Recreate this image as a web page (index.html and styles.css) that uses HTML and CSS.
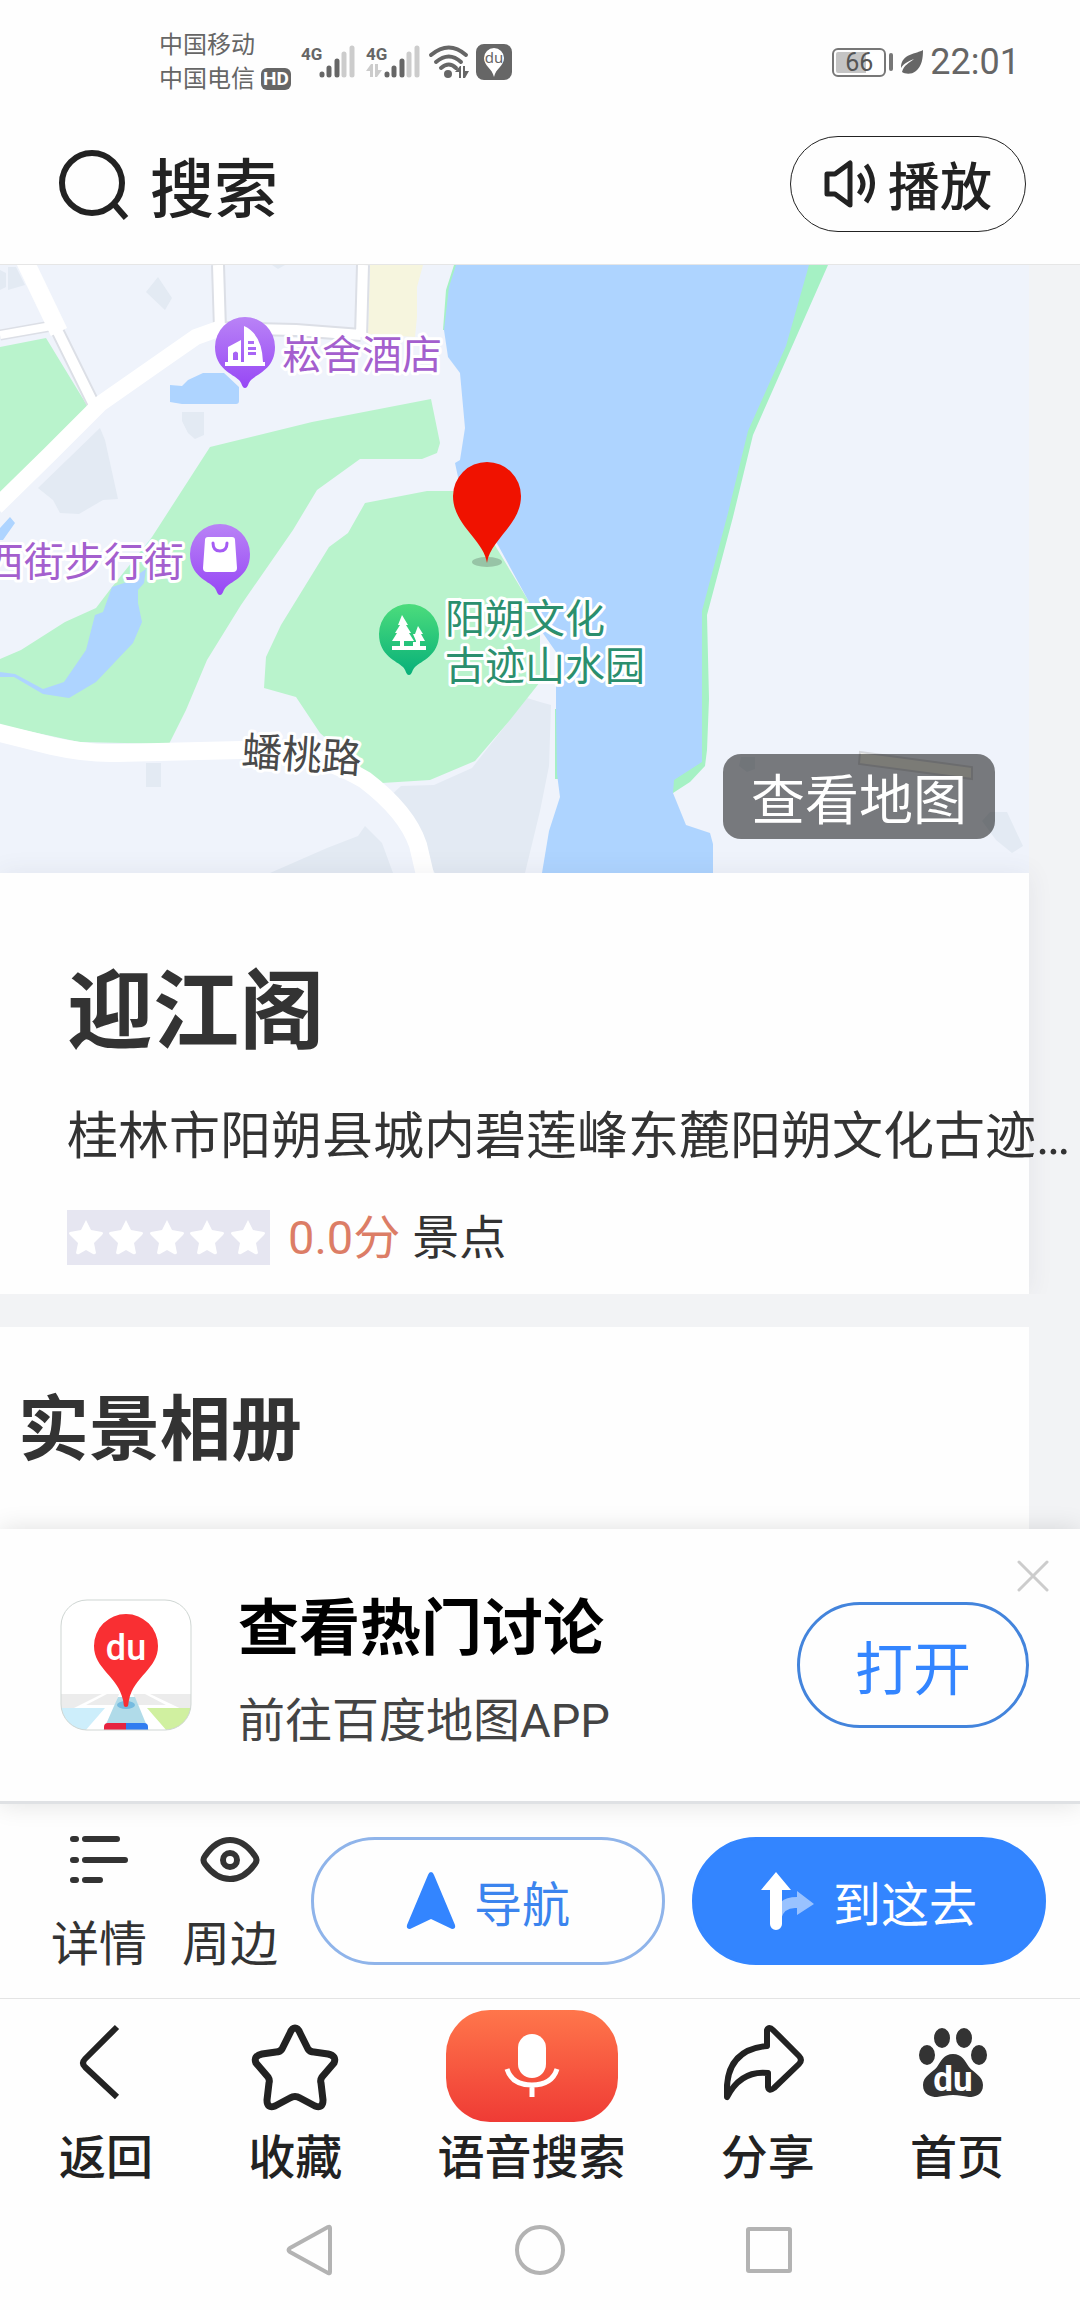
FILE: index.html
```html
<!DOCTYPE html>
<html lang="zh-CN">
<head>
    <meta charset="UTF-8">
    <meta name="viewport" content="width=device-width, initial-scale=1.0">
    <title>迎江阁</title>
    <link rel="stylesheet" href="styles.css">
</head>
<body>
    <div class="status-bar">
        <div class="carriers">
            <div>中国移动</div>
            <div class="carrier-row">中国电信 <span class="hd">HD</span></div>
        </div>
        <svg class="status-icons" width="212" height="38" viewBox="0 0 212 38" aria-hidden="true">
            <g fill="#666">
                <text class="net" x="0" y="17">4G</text>
                <text class="net" x="65" y="17">4G</text>
                <g stroke="#666" stroke-width="5" stroke-linecap="round">
                    <path d="M21 31v1M28 25v7M36 18v14M86 31v1M93 25v7M101 18v14"/>
                    <path stroke="#ccc" d="M43 11v21M51 5v27M108 11v21M116 5v27"/>
                </g>
                <path fill="#ccc" d="M65 28l5-7h2v13h-3v-6zM74 21h3v6h4l-5 7h-2z"/>
                <g fill="none" stroke="#666" stroke-width="4" stroke-linecap="round">
                    <path d="M130 12q18-15 35 0M135 19q13-11 25 0M140 25q8-7 15 0"/>
                </g>
                <circle cx="147" cy="31" r="4"/>
                <path d="M154 29l5-6h1v12h-2v-6zM162 23h2v5h4l-4 7h-2z"/>
                <rect x="175" y="1" width="36" height="36" rx="8"/>
                <path fill="#fff" d="M193 34c-2-9-10-11-10-19a10 10 0 0 1 20 0c0 8-8 10-10 19z"/>
                <text class="du-small" x="193" y="20" text-anchor="middle">du</text>
            </g>
        </svg>
        <div class="status-right">
            <span class="battery">66</span>
            <span class="battery-tip"></span>
            <svg width="24" height="26" viewBox="0 0 24 26" aria-hidden="true">
                <path fill="#666" d="M23 1c-6 4-22 3-22 18 3-5 8-7 13-9-5 4-10 6-12 13 3 2 9 3 14-1C22 17 23 9 23 1z"/>
            </svg>
            <span class="clock">22:01</span>
        </div>
    </div>

    <header class="top-bar">
        <button class="search-button">
            <svg width="72" height="72" viewBox="0 0 72 72" aria-hidden="true">
                <g fill="none" stroke="#222" stroke-width="6">
                    <circle cx="34" cy="35" r="30"/>
                    <path d="M55 55l13 15"/>
                </g>
            </svg>
            搜索
        </button>
        <button class="play-button">
            <svg width="52" height="48" viewBox="0 0 52 48" aria-hidden="true">
                <g fill="none" stroke="#222" stroke-width="5" stroke-linejoin="round">
                    <path d="M3 14h8L26 3v42L11 34H3z"/>
                    <path d="M35 14q8 10 0 20M42 5q13 18 0 37"/>
                </g>
            </svg>
            播放
        </button>
    </header>

    <main class="content">
        <section class="map">
            <svg class="map-canvas" viewBox="0 0 1029 608" role="img" aria-label="地图">
                <defs>
                    <linearGradient id="purple" x1="0" y1="0" x2="0" y2="1">
                        <stop offset="0" stop-color="#b983f6"/>
                        <stop offset="1" stop-color="#9747f5"/>
                    </linearGradient>
                    <linearGradient id="green" x1="0" y1="0" x2="0" y2="1">
                        <stop offset="0" stop-color="#4cdc7c"/>
                        <stop offset="1" stop-color="#07b079"/>
                    </linearGradient>
                    <path id="pin" d="M0 41c-3 0-3-5-6-8C-12 27-30 22-30 0a30 30 0 0 1 60 0C30 22 12 27 6 33 3 36 3 41 0 41z"/>
                </defs>
                <rect width="1029" height="608" fill="#eff3fb"/>

                <!-- buildings -->
                <g fill="#e3eaf3">
                    <path d="M158 12l14 21-7 12-19-18zM0 5l6 3v14l-6 3zM8 2h8l9 18-17 5zM182 147h22v23l-9 4-7-6-6-12z"/>
                    <path d="M100 163l5 12 13 59-15 1-24 14-19-1-7-13-15-12z"/>
                    <path d="M527 433l13 4 11 3-2 61-9 45-15 62h-90l-47-75 13-12 33-1 38-17z"/>
                    <path d="M365 561l17 17 11 30H270l57-25 31-12zM146 498h15v24h-15z"/>
                    <path d="M1007 547l16 34-11 7-16-13-14-19 8-9zM741 492h14v12l-8 3-8-6zM272 0l6 4 7-4z"/>
                </g>
                <path fill="#f6f5de" d="M370 0h53l-6 22v30l-2 20-47-3z"/>
                <path fill="#f7f6ec" stroke="#d6d8dc" stroke-width="2" d="M860 487l112 15v12l-113-15z"/>

                <!-- parks -->
                <g fill="#b9f3cc">
                    <path d="M0 82l46-9 42 69-2 5-50 48-36 35z"/>
                    <path d="M431 134l9 44-3 10-15 6h-62l-43 31-24 40-52 75-34 55-21 50-17 34-90-2-79-17v-66l21-9 44-28 31-14 16-21 40-50 58-90 102-25z"/>
                    <path d="M427 226h34l35 56 32 53 12 29v53l-30 38-35 41-45 19-48 3-17-10-45-40-24-36-32-9 2-31 15-32 48-78 19-14 17-30z"/>
                </g>

                <!-- river and ponds -->
                <path fill="#a5f1c4" d="M600 0h228l-75 170-20 82-26 98 2 84-2 51-2 16-15 16-17 11h-73zM454 0h4l-12 65h-3l3-40zM555 444h3v70h-3z"/>
                <g fill="#aed4ff">
                    <path d="M456 0l-7 22-5 43 4 27 12 16 5 55-5 32-5 3 3 14 41 70 29 53 12 29 16 23v57l1 65 3 23-11 34-7 42h171v-29l-3-11-24-8-13-32 1-13 28-18V346l26-98 20-82 38-85L809 0z"/>
                    <path d="M170 120l12 1 6-6 15-7h21l15 14v14q0 3-3 3h-54l-12-2zM0 263l10-11 5 6-12 17H0z"/>
                    <path d="M112 322l15-5 19-13-2 14-6 7v13l4 19-9 21-37 39-27 16-26-4-29-17H0v-5l15 2 28 15 21-7 22-32 9-35 8-3z"/>
                </g>

                <!-- roads -->
                <g fill="none" stroke="#dcdfe6">
                    <path stroke-width="14" d="M218 0l2 63M363 0l-2 70M57 65l38 77M220 63l76 2 65 5"/>
                    <path stroke-width="11" d="M0 70l57-10"/>
                </g>
                <g fill="none" stroke="#fff">
                    <path stroke-width="10" d="M218 0l2 66M363 0l-2 72M57 65l38 77M220 63l76 2 65 5"/>
                    <path stroke-width="8" d="M0 70l57-10"/>
                    <path stroke-width="18" d="M24-6l35 73"/>
                    <path stroke-width="16" d="M-4 242l54-53 50-50 60-42 36-25 25-9"/>
                    <path stroke-width="18" d="M-4 467l56 14q36 8 65 7l124-3q70-2 124 30 42 32 53 65l8 34"/>
                </g>

                <!-- hotel -->
                <g transform="translate(245 82)">
                    <use href="#pin" fill="url(#purple)"/>
                    <path fill="#fff" d="M-20 15h3V0l13-7V15h3v-36q18 8 19 36h2v4h-40zM3-6v3h6v-3zM3 0v3h8V0zM3 5v3h8V5zM-12 13h5V6q-2-3-5 0z" fill-rule="evenodd"/>
                </g>
                <!-- shopping street -->
                <g transform="translate(220 289)">
                    <use href="#pin" fill="url(#purple)"/>
                    <path fill="#fff" d="M-12-17h24q3 0 3 3l2 28q0 4-4 4h-26q-4 0-4-4l2-28q0-3 3-3z"/>
                    <path fill="none" stroke="#a55cf4" stroke-width="3" stroke-linecap="round" d="M-7-11q0 8 7 8t7-8"/>
                </g>
                <!-- park -->
                <g transform="translate(409 369)">
                    <use href="#pin" fill="url(#green)"/>
                    <path fill="#fff" d="M-7-19l6 10h-2l5 8h-2l5 8H-5v5H4V8h4v4h9v4h-34v-4h8V7h-8l5-8h-2l5-8h-2zM9-8l5 8h-2l4 7h-5v6H7V7L4 0h2z"/>
                </g>
                <!-- current place -->
                <ellipse cx="487" cy="297" rx="15" ry="5" fill="#97c4a6"/>
                <path fill="#f01200" d="M487 298c-3-23-34-38-34-67a34 34 0 0 1 68 0c0 29-31 44-34 67z"/>

                <g class="map-label purple">
                    <text x="282" y="104">崧舍酒店</text>
                    <text x="184" y="311" text-anchor="end">西街步行街</text>
                </g>
                <g class="map-label green">
                    <text x="445" y="368">阳朔文化</text>
                    <text x="445" y="415">古迹山水园</text>
                </g>
                <text class="map-label road" x="241" y="500" transform="rotate(4 241 500)">蟠桃路</text>
            </svg>
            <a class="view-map" href="#map">查看地图</a>
        </section>

        <section class="card place">
            <h1>迎江阁</h1>
            <p class="address">桂林市阳朔县城内碧莲峰东麓阳朔文化古迹<span class="latin">…</span></p>
            <div class="rating">
                <svg class="stars" width="203" height="55" viewBox="0 0 203 55" role="img" aria-label="0 星">
                    <defs>
                        <path id="star" d="M0-17l5 10 11 2q2 1 0 3L8 6l2 10q-1 2-3 1L0 13l-7 4q-2 1-3-1L-8 6l-8-8q-2-2 0-3l11-2z"/>
                    </defs>
                    <g fill="#fff">
                        <use href="#star" x="19" y="27"/>
                        <use href="#star" x="59" y="27"/>
                        <use href="#star" x="100" y="27"/>
                        <use href="#star" x="140" y="27"/>
                        <use href="#star" x="181" y="27"/>
                    </g>
                </svg>
                <span class="score">0.0分</span>
                <span>景点</span>
            </div>
        </section>

        <section class="card album">
            <h2>实景相册</h2>
        </section>
    </main>

    <aside class="app-banner">
        <svg class="app-icon" width="132" height="132" viewBox="0 0 132 132" aria-hidden="true">
            <defs>
                <clipPath id="icon-shape"><rect x="1" y="1" width="130" height="130" rx="26"/></clipPath>
            </defs>
            <rect x="1" y="1" width="130" height="130" rx="26" fill="#fff"/>
            <g clip-path="url(#icon-shape)">
                <path fill="#ececec" d="M0 95h42L0 116zM47 95h12l-4 11H26zM90 95h42v20zM73 95h12l21 11H78z"/>
                <path fill="#cdeefb" d="M0 109h45l-20 23H0z"/>
                <path fill="#d0f0a0" d="M87 109h45v23h-25z"/>
                <path fill="#b0dbe9" d="M58 98h17l14 34H43z"/>
                <ellipse cx="66" cy="106" rx="9" ry="4" fill="#75bbe0"/>
                <path fill="#e62440" d="M66 124H48q-4 0-4 4v4h22z"/>
                <path fill="#307df0" d="M66 124h18q4 0 4 4v4H66z"/>
                <path fill="#f92f33" d="M66 108c-3 0-2-3-3-7-5-24-29-31-29-54a32 32 0 0 1 64 0c0 23-24 30-29 54-1 4 0 7-3 7z"/>
                <text class="du-logo" x="66" y="61" text-anchor="middle">du</text>
            </g>
            <rect x="1" y="1" width="130" height="130" rx="26" fill="none" stroke="#cfd6d3"/>
        </svg>
        <div class="app-text">
            <h3>查看热门讨论</h3>
            <p>前往百度地图<span class="latin">APP</span></p>
        </div>
        <button class="open-button">打开</button>
        <button class="close-button" aria-label="关闭">
            <svg width="32" height="32" viewBox="0 0 32 32" aria-hidden="true">
                <path fill="none" stroke="#ccc" stroke-width="3" stroke-linecap="round" d="M2 2l28 28M30 2L2 30"/>
            </svg>
        </button>
    </aside>

    <div class="actions">
        <a class="action-link" href="#detail">
            <svg width="60" height="52" viewBox="0 0 60 52" aria-hidden="true">
                <path fill="none" stroke="#333" stroke-width="6" stroke-linecap="round" d="M4 5h3M16 5h32M4 26h3M16 26h40M4 46h3M16 46h15"/>
            </svg>
            详情
        </a>
        <a class="action-link" href="#around">
            <svg width="60" height="52" viewBox="0 0 60 52" aria-hidden="true">
                <g fill="none" stroke="#333" stroke-width="6">
                    <path d="M5 22Q16 6 30 6t25 16q3 4 0 8Q44 45 30 45T5 30q-3-4 0-8z"/>
                    <circle cx="30" cy="26" r="7"/>
                </g>
            </svg>
            周边
        </a>
        <button class="pill navigate">
            <svg width="50" height="58" viewBox="0 0 50 58" aria-hidden="true">
                <path fill="#3385ff" d="M25 0q2 0 3 3l21 50q1 4-3 4L25 47 4 57q-4 0-3-4L22 3q1-3 3-3z"/>
            </svg>
            导航
        </button>
        <button class="pill go">
            <svg width="54" height="58" viewBox="0 0 54 58" aria-hidden="true">
                <path fill="#99c2ff" d="M20 30q5-5 16-5v-6l17 13-17 11v-7q-13-1-16 11z"/>
                <path fill="#fff" d="M15 0l15 18h-9v34a6 6 0 0 1-12 0V18H0z"/>
            </svg>
            到这去
        </button>
    </div>

    <nav class="tool-bar">
        <a class="tool" href="#back">
            <svg width="88" height="88" viewBox="0 0 88 88" aria-hidden="true">
                <path fill="none" stroke="#222" stroke-width="6" d="M55 3L23 35q-4 4 0 8l32 30"/>
            </svg>
            返回
        </a>
        <a class="tool" href="#favorite">
            <svg width="88" height="88" viewBox="0 0 88 88" aria-hidden="true">
                <path fill="none" stroke="#222" stroke-width="7" stroke-linejoin="round" d="M44 4q3 0 5 5l8 16q2 3 6 3l14 2q9 2 6 9L71 53q-2 3-1 6l2 17q0 9-8 6L49 74q-5-3-10 0l-15 8q-8 3-8-6l2-17q1-3-1-6L5 39q-3-7 6-9l14-2q4 0 6-3l8-16q2-5 5-5z"/>
            </svg>
            收藏
        </a>
        <a class="tool" href="#voice">
            <span class="voice">
                <svg width="56" height="66" viewBox="0 0 56 66" aria-hidden="true">
                    <rect x="14" y="1" width="28" height="44" rx="14" fill="#fff"/>
                    <path fill="none" stroke="#fff" stroke-width="5" d="M3 36q5 16 25 16t25-16M28 52v12"/>
                </svg>
            </span>
            语音搜索
        </a>
        <a class="tool" href="#share">
            <svg width="88" height="88" viewBox="0 0 88 88" aria-hidden="true">
                <path fill="none" stroke="#222" stroke-width="6" stroke-linejoin="round" d="M43 6q2-4 6 0l26 26q4 4 0 8L50 64q-5 4-6-1V49Q17 46 3 73 0 26 43 22z"/>
            </svg>
            分享
        </a>
        <a class="tool" href="#home">
            <svg width="88" height="88" viewBox="3 0 88 88" aria-hidden="true">
                <g fill="#333">
                    <ellipse cx="32" cy="14" rx="8" ry="10"/>
                    <ellipse cx="54" cy="14" rx="8" ry="10"/>
                    <ellipse cx="17" cy="31" rx="8" ry="10"/>
                    <ellipse cx="69" cy="31" rx="8" ry="10"/>
                    <path d="M43 30c9 0 12 7 16 13 5 6 14 9 14 18 0 10-8 12-14 12-6-1-10-2-16-2s-10 1-16 2c-6 0-14-2-14-12 0-9 9-12 14-18 4-6 7-13 16-13z"/>
                </g>
                <text class="du-paw" x="43" y="67" text-anchor="middle">du</text>
            </svg>
            首页
        </a>
    </nav>

    <div class="system-nav">
        <button aria-label="返回">
            <svg width="52" height="52" viewBox="0 0 52 52" aria-hidden="true">
                <path d="M46 4v44q0 2-2 1L6 28q-3-2 0-4L44 3q2-1 2 1z"/>
            </svg>
        </button>
        <button aria-label="主屏幕">
            <svg width="52" height="52" viewBox="0 0 52 52" aria-hidden="true">
                <circle cx="26" cy="26" r="23"/>
            </svg>
        </button>
        <button aria-label="最近任务">
            <svg width="52" height="52" viewBox="0 0 52 52" aria-hidden="true">
                <rect x="4" y="5" width="42" height="42" rx="1"/>
            </svg>
        </button>
    </div>
</body>
</html>
```
FILE: styles.css
```css
* {
    box-sizing: border-box;
}
body {
    font-family: "Noto Sans CJK SC", sans-serif;
    margin: 0;
    height: 100vh;
    display: flex;
    flex-direction: column;
    background-color: #fefefe;
    color: #333;
}
h1, h2, h3, p {
    margin: 0;
}
a {
    color: inherit;
    text-decoration: none;
}
button {
    font-family: inherit;
    color: inherit;
    background: none;
    border: none;
    padding: 0;
    cursor: pointer;
}
svg {
    display: block;
    flex-shrink: 0;
}
.latin {
    font-family: Roboto, sans-serif;
    line-height: 1;
}

/* Status bar */
.status-bar {
    display: flex;
    align-items: center;
    padding: 28px 60px 8px 159px;
    font-family: Roboto, "Noto Sans CJK SC", sans-serif;
    color: #666;
}
.carriers {
    font-size: 24px;
    line-height: 34px;
    width: 142px;
}
.carrier-row {
    display: flex;
    align-items: center;
    gap: 6px;
    white-space: nowrap;
}
.hd {
    background-color: #666;
    color: #fff;
    font-size: 19px;
    font-weight: bold;
    line-height: 22px;
    padding: 0 2px;
    border-radius: 6px;
}
.status-icons {
    overflow: visible;
}
.net {
    font: bold 17px Roboto, sans-serif;
}
.du-small {
    font: 15px "Noto Sans", sans-serif;
}
.status-right {
    margin-left: auto;
    display: flex;
    align-items: center;
}
.battery {
    width: 54px;
    height: 29px;
    border: 2px solid #777;
    border-radius: 6px;
    background: linear-gradient(90deg, #c4c4c4 66%, #fff 66%) content-box;
    padding: 2px;
    font-size: 25px;
    line-height: 22px;
    text-align: center;
    color: #555;
}
.battery-tip {
    width: 4px;
    height: 18px;
    margin: 0 7px 0 3px;
    border-radius: 2px;
    background-color: #777;
}
.clock {
    font-size: 36px;
    line-height: 40px;
    margin-left: 6px;
}

/* Search bar */
.top-bar {
    display: flex;
    align-items: center;
    justify-content: space-between;
    padding: 32px 54px 32px 58px;
    border-bottom: 1px solid #e6e6e6;
    color: #222;
}
.search-button {
    display: flex;
    align-items: center;
    gap: 20px;
    font-size: 64px;
    font-weight: 500;
    line-height: 96px;
}
.play-button {
    display: flex;
    align-items: center;
    gap: 12px;
    padding: 0 33px;
    border: 1px solid #222;
    border-radius: 48px;
    font-size: 52px;
    font-weight: 500;
    line-height: 94px;
}

/* Page content */
.content {
    flex: 1;
    min-height: 0;
    overflow: hidden;
    display: flex;
    flex-direction: column;
    padding-right: 51px;
    background-color: #f2f3f5;
}
.map {
    position: relative;
    flex-shrink: 0;
}
.map-canvas {
    width: 100%;
    height: auto;
}
.map-label {
    font-size: 40px;
    stroke: #fff;
    stroke-width: 6px;
    stroke-linejoin: round;
    paint-order: stroke;
}
.map-label.purple {
    fill: #a45fce;
}
.map-label.green {
    fill: #2b8f6e;
}
.map-label.road {
    fill: #4a4a4a;
}
.view-map {
    position: absolute;
    right: 34px;
    bottom: 34px;
    padding: 0 28px;
    border-radius: 18px;
    background-color: rgba(0, 0, 0, 0.5);
    color: #fff;
    font-size: 54px;
    line-height: 85px;
}
.card {
    background-color: #fefefe;
}
.place {
    position: relative;
    padding: 80px 0 29px 67px;
    box-shadow: 0 0 24px rgba(60, 70, 90, 0.08);
    clip-path: inset(-24px -60px 0 0);
}
.place h1 {
    font-size: 86px;
    line-height: 104px;
}
.address {
    margin: 42px 0 45px;
    font-size: 51px;
    line-height: 66px;
    white-space: nowrap;
}
.rating {
    display: flex;
    align-items: center;
    gap: 12px;
    font-family: Roboto, "Noto Sans CJK SC", sans-serif;
    font-size: 47px;
    line-height: 55px;
}
.stars {
    background-color: #e6e6f1;
    margin-right: 6px;
}
.score {
    color: #dc7d66;
}
.album {
    flex: 1;
    margin-top: 33px;
    padding: 46px 18px 0;
}
.album h2 {
    font-size: 71px;
    line-height: 100px;
}

/* App banner */
.app-banner {
    position: relative;
    display: flex;
    align-items: center;
    padding: 57px 51px 57px 60px;
    background-color: #fefefe;
    border-bottom: 3px solid #dfe1e4;
    box-shadow: 0 0 24px rgba(0, 0, 0, 0.12);
}
.app-text {
    flex: 1;
    padding-left: 46px;
}
.app-text h3 {
    color: #000;
    font-size: 61px;
    line-height: 76px;
}
.app-text p {
    color: #444;
    font-size: 47px;
    line-height: 50px;
    margin-top: 30px;
}
.open-button {
    padding: 0 55px;
    border: 3px solid #4384dc;
    border-radius: 63px;
    color: #3385ff;
    font-size: 58px;
    line-height: 120px;
}
.close-button {
    position: absolute;
    top: 31px;
    right: 31px;
}

/* Place actions */
.actions {
    display: flex;
    align-items: center;
    gap: 27px;
    padding: 30px 34px 30px 51px;
}
.action-link {
    display: flex;
    flex-direction: column;
    align-items: center;
    gap: 26px;
    font-size: 48px;
    line-height: 56px;
}
.action-link + .action-link {
    margin-left: 8px;
}
.pill {
    flex: 1;
    display: flex;
    align-items: center;
    justify-content: center;
    gap: 18px;
    border: 3px solid #8fb4ea;
    border-radius: 64px;
    color: #3b84ee;
    font-size: 48px;
    line-height: 122px;
}
.navigate {
    margin-left: 6px;
}
.go {
    border-color: #3385ff;
    background-color: #3385ff;
    color: #fff;
}

/* Browser toolbar */
.tool-bar {
    display: flex;
    justify-content: space-between;
    align-items: flex-end;
    padding: 11px 76px 8px 59px;
    border-top: 1px solid #e4e4e4;
    color: #222;
}
.tool {
    display: flex;
    flex-direction: column;
    align-items: center;
    gap: 14px;
    font-size: 47px;
    font-weight: 500;
    line-height: 56px;
}
.voice {
    display: flex;
    align-items: center;
    justify-content: center;
    width: 172px;
    height: 112px;
    margin-bottom: -10px;
    border-radius: 44px;
    background: linear-gradient(#ff764b, #ef3b35);
}
.du-logo {
    font: 500 36px Roboto, sans-serif;
    fill: #fff;
}
.du-paw {
    font: bold 35px Roboto, sans-serif;
    fill: #fff;
}

/* System navigation */
.system-nav {
    display: flex;
    justify-content: center;
    gap: 178px;
    padding: 34px 0;
}
.system-nav svg {
    fill: none;
    stroke: #b3b3b3;
    stroke-width: 4px;
}
```
